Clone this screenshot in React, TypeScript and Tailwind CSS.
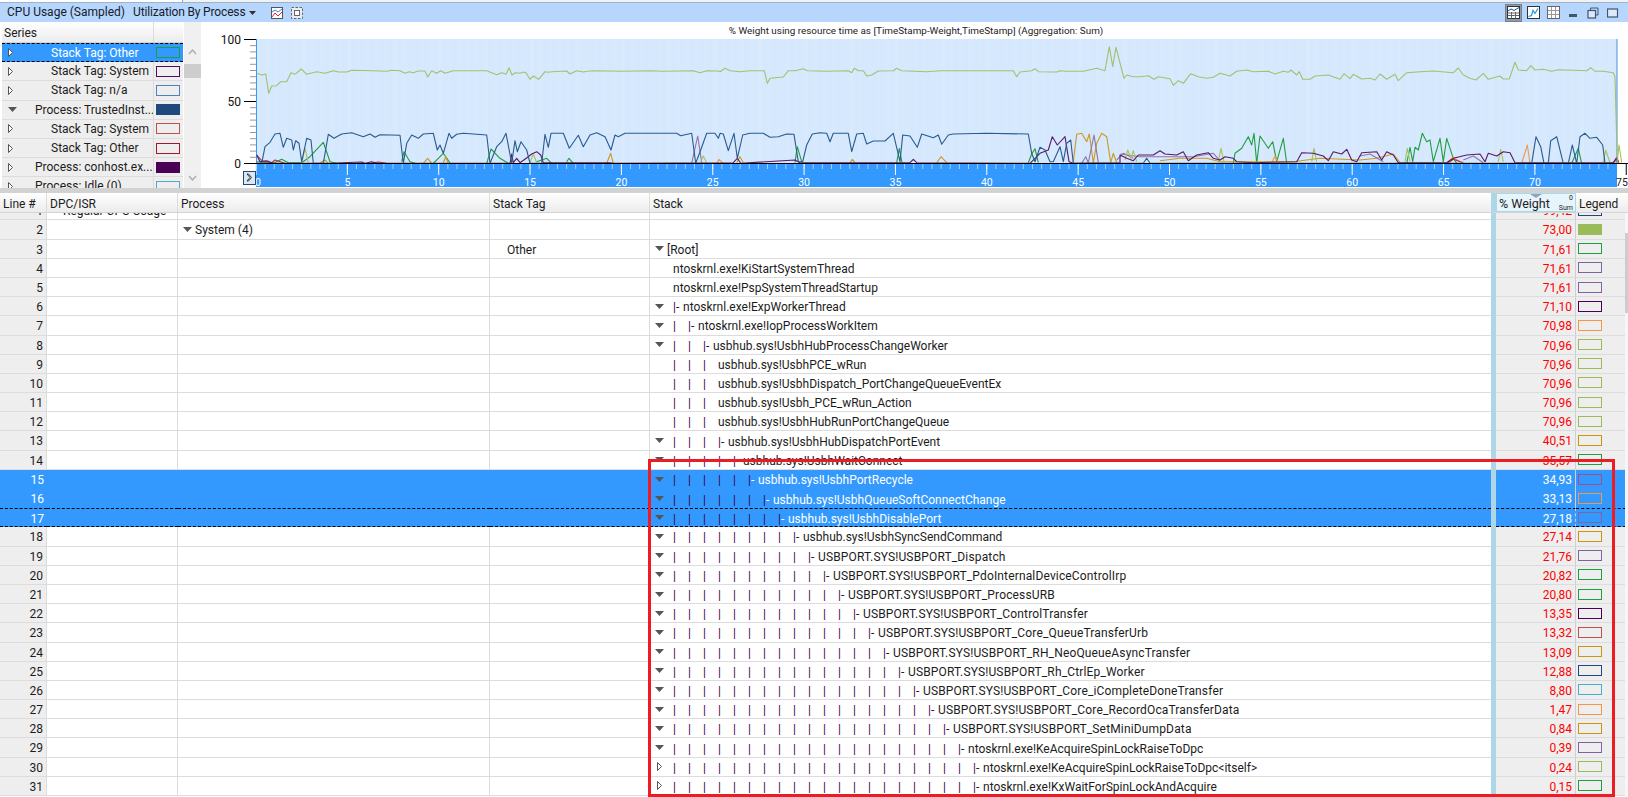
import clsx from "clsx";

// point lists are read off zoomed crops, so each helper maps crop coords to page coords
const crop = (ox: number, oy: number, p: number[]) => {
  const out: string[] = [];
  for (let i = 0; i < p.length; i += 2) out.push(`${(ox + p[i] / 3).toFixed(1)},${(oy + p[i + 1] / 3).toFixed(1)}`);
  return out;
};
const z6 = (p: number[]) => crop(230, 30, p);
const z7 = (p: number[]) => crop(720, 30, p);
const z8 = (p: number[]) => crop(1120, 30, p);

const oliveMain = [
  ...z6([80,130,95,135,107,132,116,190,125,168,140,167,152,155,170,155,183,128,195,133,214,117,230,133,260,125,285,130,310,122,325,126,350,126,365,121,430,122,470,124,485,121,510,122,525,130,538,125,550,128,565,123,585,123,593,141,605,122,620,130,632,122,645,130,670,122,770,122,800,134,815,128,828,133,837,113,846,135,856,128,870,130,880,126,888,128,900,148,910,138,926,148,945,125,955,127,965,125,1010,123,1020,132,1040,122,1060,126,1072,124,1090,122,1180,124,1260,122,1300,124,1390,122,1410,128,1430,122,1465,123]),
  ...z7([0,125,15,115,30,122,60,125,90,122,133,122,142,160,150,145,190,141,205,122,225,122,250,116,262,122,320,124,385,122,395,128,403,115,415,122,430,122,440,138,455,135,475,123,520,122,530,115,545,122,620,125,660,122,880,122,890,140,900,126,935,122,945,116,955,125,1010,126,1020,122,1040,124,1090,124,1130,115,1155,122,1168,50,1178,110,1188,52]),
  ...z8([12,145,20,135,40,140,60,140,85,137,102,148,115,140,150,146,160,166,175,152,190,160,212,131,235,140,260,145,280,142,300,130,330,138,350,124,380,120,400,125,445,124,465,132,490,124,505,127,513,120,530,135,538,125,548,148,570,148,585,138,625,135,660,148,672,131,690,146,700,133,725,147,750,145,765,150,780,132,800,148,825,133,835,152,860,128,900,125,940,123,1000,128,1015,114,1030,135,1050,145,1068,150,1090,130,1105,148,1140,138,1150,147,1168,147,1185,97,1195,120,1220,122,1232,107,1245,120,1270,118,1295,124,1315,119,1400,122,1412,113,1425,124,1450,124,1480,128,1485,140,1492,400]),
];

const navyMain = [
  ...z6([80,400,95,400,105,350,120,337,135,312,150,310,160,352,170,325,185,330,190,360,197,332,207,340,215,395,230,325,243,330,250,400,280,400,295,313,312,325,335,312,365,308,400,320,420,312,435,322,450,314,510,316,520,400,530,340,545,315,565,325,580,312,610,310,622,360,630,345,640,370,657,310,665,325,680,313,700,310,770,315,780,400,800,350,815,335,828,310,845,400,855,332,862,365,873,335,890,360,900,400,935,400,945,313,955,352,963,310,1000,310,1018,355,1045,316,1060,350,1080,315,1100,308,1125,320,1143,360,1155,315,1165,320,1185,310,1340,310,1352,317,1385,310,1397,400,1412,360,1430,310,1455,310,1465,325,1470,311]),
  ...z7([0,310,10,312,25,362,42,310,52,385,68,315,90,310,130,310,150,322,175,320,200,312,222,313,235,395,248,395,260,345,277,312,300,308,320,310,330,335,340,310,385,310,395,365,410,312,430,310,440,342,460,333,495,333,520,310,540,395,548,315,570,318,592,352,605,312,640,323,655,315,665,343,685,315,700,312,800,310,925,312,935,370,945,395,960,352,975,360,990,395,1000,395,1020,350,1030,395,1040,340,1052,330,1060,400]),
  ...z8([70,400,80,385,90,400,1235,400,1248,320,1262,350,1272,400,1285,400,1292,332,1310,320,1330,400,1345,400,1357,345,1370,400,1380,320,1395,310,1410,325,1430,322,1448,345,1455,400,1492,400]),
];

const purpleMain = [
  ...z6([80,375,90,395,110,392,130,400,300,400,395,396,405,400,425,395,440,400,840,400,845,372,850,398,860,385,870,398,895,380,905,372,920,365,932,375,940,398,1140,398,1150,400]),
  ...z7([40,398,52,385,62,400,225,390,240,398,570,398,580,388,590,398,930,400,960,370,985,360,997,320,1012,345,1035,320,1047,395,1060,400,1200,398]),
  ...z8([0,375,20,385,40,392,55,375,100,375,120,362,135,372,170,375,190,365,205,392,230,375,265,368,280,385,300,390,315,380,340,385,350,395,400,398,530,395,545,368,580,370,610,378,625,392,640,365,665,372,680,358,695,390,710,395,725,368,770,365,785,390,800,365,820,375,835,398,860,398,980,398,1000,385,1040,375,1080,372,1095,395,1105,370,1130,378,1150,365,1170,368,1185,398,1480,398,1490,385,1492,398]),
];

const greens = [
  z6([80,395,130,400,155,388,175,398,215,398,240,380,280,337,300,395,320,400]),
  z6([515,395,522,365,540,395,555,400]),
  z6([610,400,640,370,660,398]),
  z6([770,400,783,357,810,385,835,400]),
  z6([920,395,950,385,965,400]),
  z6([1010,395,1017,385,1030,400]),
  z7([225,398,232,350,245,395]),
  z7([530,398,538,355,546,398]),
  z7([925,398,935,372,945,356,955,398]),
  z8([340,400,345,370,365,355,385,320,395,345,402,310,410,400,420,318,445,355,458,335,470,395,490,325,500,400]),
  z8([860,400,870,352,878,395,885,352,895,360,907,310,920,335,930,330,940,395,960,325,970,395,980,325,1000,385,1010,400]),
  z8([1355,400,1375,355,1385,400]),
];

const golds = [
  z6([580,400,593,385,605,400]),
  z6([640,398,647,380,655,400]),
  z6([1130,400,1142,370,1150,400]),
  z6([270,398,285,390,295,400]),
  z7([50,398,60,380,70,398]),
  z7([390,398,397,388,405,398]),
  z7([650,398,663,380,680,398]),
  z7([1060,395,1070,313,1085,310,1100,335,1108,312,1120,398,1130,340,1145,310,1160,320,1172,398,1180,370,1190,398]),
  z8([120,392,180,385,260,385,300,395,520,395,600,385,720,390,770,385,820,372,840,398]),
];

const oranges = [
  z6([1460,400,1467,388,1480,400]),
  z8([455,398,465,378,475,398]),
  z8([980,398,1000,382,1020,395]),
  z8([1205,400,1222,345,1230,400]),
];

const lilacs = [
  z6([1385,400,1403,318,1415,398]),
  z7([1085,400,1097,380,1105,398,1122,315,1135,398]),
  z7([1190,390,1210,370,1240,385]),
  z8([1,372,60,380,130,380,220,380,280,370,300,392]),
  z8([1030,390,1060,378,1090,398]),
  z8([720,378,750,372,790,395]),
];

const olives = [
  z6([215,400,225,355,235,398]),
  z6([900,398,910,372,920,398]),
  z6([1412,395,1420,378,1430,398]),
  z8([15,390,23,360,33,385,40,362,50,395]),
  z8([295,395,303,355,312,395]),
  z8([575,395,582,355,590,395]),
  z8([855,395,862,355,870,395]),
  z8([1135,395,1142,358,1150,395]),
  z8([1450,398,1457,360,1470,398,1492,395,1497,345,1505,398]),
];

const reds = [
  z6([80,375,95,392,125,398,135,390,165,400]),
  z6([420,400,445,396,470,400]),
  z8([985,398,1000,388,1030,398]),
  z8([1480,398,1490,382,1497,398]),
];

const Line = ({ pts, color, w = 1.1 }: { pts: string[]; color: string; w?: number }) => (
  <polyline points={pts.join(" ")} fill="none" stroke={color} strokeWidth={w} strokeLinejoin="round" />
);

function Chart() {
  const toX = (s: number) => 256 + s * 18.27;
  const stripes = Array.from({ length: 149 }, (_, i) => i);
  const ticks = Array.from({ length: 149 }, (_, i) => i);
  const labels = Array.from({ length: 16 }, (_, i) => i * 5);
  const yMinor = [5, 15, 20, 25, 30, 35, 40, 45, 55, 60, 65, 70, 75, 80, 85, 90, 95, 10];
  return (
    <svg viewBox="201 22 1427 166" className="w-[1427px] h-[166px] block shrink-0">
      <text x="916" y="34" textAnchor="middle" fontSize="9.9" fill="#222">
        % Weight using resource time as [TimeStamp-Weight,TimeStamp] (Aggregation: Sum)
      </text>
      <rect x="256" y="39" width="1361" height="125" fill="#d5e8fd" />
      {stripes.map((i) => (
        <rect key={i} x={256 + i * 9.13} y="39" width="4" height="125" fill="#ffffff" opacity={(i * 7) % 5 === 0 ? 0.12 : 0.05} />
      ))}
      <line x1="256.5" y1="39" x2="256.5" y2="164" stroke="#3399ff" />
      <line x1="1617" y1="39" x2="1617" y2="164" stroke="#4a90e2" />
      <line x1="256" y1="39.5" x2="244" y2="39.5" stroke="#000" />
      <line x1="256" y1="101.5" x2="244" y2="101.5" stroke="#000" />
      <line x1="256" y1="163.5" x2="244" y2="163.5" stroke="#000" />
      {yMinor.map((v) => (
        <line key={v} x1="256" x2="250" y1={163.5 - v * 1.24} y2={163.5 - v * 1.24} stroke="#999" />
      ))}
      <text x="241" y="44" textAnchor="end" fontSize="12" fill="#111">100</text>
      <text x="241" y="106" textAnchor="end" fontSize="12" fill="#111">50</text>
      <text x="241" y="168" textAnchor="end" fontSize="12" fill="#111">0</text>

      {greens.map((p, i) => <Line key={i} pts={p} color="#1e9e3f" />)}
      {golds.map((p, i) => <Line key={i} pts={p} color="#cb9a1e" />)}
      {oranges.map((p, i) => <Line key={i} pts={p} color="#f79646" />)}
      {lilacs.map((p, i) => <Line key={i} pts={p} color="#8e74ad" />)}
      {olives.map((p, i) => <Line key={i} pts={p} color="#a8c060" />)}
      {reds.map((p, i) => <Line key={i} pts={p} color="#b3303a" />)}
      <Line pts={purpleMain} color="#5b1766" />
      <Line pts={navyMain} color="#2a5a8e" />
      <Line pts={oliveMain} color="#a3c06f" />

      <rect x="256" y="164" width="1361" height="23" fill="#3399ff" />
      <line x1="256" y1="163.5" x2="1628" y2="163.5" stroke="#000" />
      {ticks.map((i) => (
        <line key={i} x1={256 + i * 9.135} x2={256 + i * 9.135} y1="164" y2="169" stroke="#a6d0fb" />
      ))}
      {labels.map((s) => (
        <line key={s} x1={toX(s)} x2={toX(s)} y1="164" y2="175" stroke={s === 75 ? "#000" : "#ffffff"} />
      ))}
      {labels.map((s) => (
        <text key={s} x={s === 0 ? 258 : s === 75 ? 1622 : toX(s)} y="186" fontSize="10.5" textAnchor="middle" fill={s === 75 ? "#222" : "#ffffff"}>
          {s}
        </text>
      ))}
      <rect x="243.500" y="171.500" width="12" height="13" fill="#dbe8f6" stroke="#1f497d" />
      <path d="M247 174h1.500l3 3.500l-3 3.500H247l3-3.500z" fill="#fff" stroke="#333" strokeWidth="1" />
    </svg>
  );
}

const DownTri = ({ color = "#555" }: { color?: string }) => (
  <svg width="9" height="5" viewBox="0 0 9 5" className="shrink-0"><path d="M0 0h9L4.500 5z" fill={color} /></svg>
);
const RightTri = () => (
  <svg width="5" height="9" viewBox="0 0 5 9" className="shrink-0"><path d="M.5.5L4.500 4.500L.5 8.500z" fill="#fff" stroke="#555" /></svg>
);

function Swatch({ color, filled }: { color: string; filled?: boolean }) {
  return (
    <span
      className="block w-[24px] h-[11px] border shrink-0"
      style={{ borderColor: color, backgroundColor: filled ? color : undefined }}
    />
  );
}

const seriesRows = [
  { label: "Stack Tag: Other", tri: "r", indent: true, color: "#1e9e3f", selected: true },
  { label: "Stack Tag: System", tri: "r", indent: true, color: "#4b0f5c" },
  { label: "Stack Tag: n/a", tri: "r", indent: true, color: "#4f81bd" },
  { label: "Process: TrustedInst...", tri: "d", color: "#1f497d", filled: true },
  { label: "Stack Tag: System", tri: "r", indent: true, color: "#c0504d" },
  { label: "Stack Tag: Other", tri: "r", indent: true, color: "#a5162a" },
  { label: "Process: conhost.ex...", tri: "r", color: "#4b0055", filled: true },
  { label: "Process: Idle (0)", tri: "r", color: "#4bacc6" },
];

function SeriesPanel() {
  return (
    <div className="w-[201px] h-[166px] shrink-0 flex overflow-hidden pl-[2px]">
      <div className="w-[181px] shrink-0">
        <div className="h-[21px] flex bg-gradient-to-b from-white to-[#ececec] border-b border-[#d4d4d4]">
          <span className="w-[152px] pl-[2px] leading-[22px] border-r border-[#dcdcdc]">Series</span>
        </div>
        {seriesRows.map((r, i) => (
          <div
            key={i}
            className={clsx(
              "flex items-center h-[19.2px] shrink-0",
              r.selected ? "bg-[#3399ff] text-white border-y border-dashed border-black" : "bg-[#eeeeee] border-b border-[#dcdcdc]"
            )}
          >
            <span className={clsx("w-[152px] h-full flex items-center overflow-hidden whitespace-nowrap", !r.selected && "border-r border-[#dcdcdc]")}>
              <span className="w-[33px] flex justify-start pl-[6px] shrink-0">{r.tri === "d" ? <DownTri /> : <RightTri />}</span>
              <span className={r.indent ? "pl-[16px]" : ""}>{r.label}</span>
            </span>
            <span className="pl-[2px]"><Swatch color={r.color} filled={r.filled} /></span>
          </div>
        ))}
      </div>
      <div className="w-[17px] ml-[1px] shrink-0 flex flex-col items-center bg-[#f0f0f0]">
        <svg width="9" height="6" viewBox="0 0 9 6" className="mt-[27px] shrink-0"><path d="M1 5l3.500-4L8 5" fill="none" stroke="#aaa" strokeWidth="1.300" /></svg>
        <div className="w-full h-[14px] bg-[#cdcdcd] mt-[9px] shrink-0" />
        <svg width="9" height="6" viewBox="0 0 9 6" className="mt-[97px] shrink-0"><path d="M1 1l3.500 4L8 1" fill="none" stroke="#aaa" strokeWidth="1.300" /></svg>
      </div>
    </div>
  );
}

type Row = {
  line: number;
  slot?: number;
  branch?: boolean;
  text?: string;
  tri?: "d" | "r";
  weight: string;
  color: string;
  filled?: boolean;
  dpc?: string;
  process?: string;
  tag?: string;
  root?: boolean;
};

const GOLD = "#c8970f";
const PURP = "#8064a2";
const GRN = "#1e9e3f";
const OLV = "#9bbb59";
const DRK = "#4b0055";

const rows: Row[] = [
  { line: 1, dpc: "Regular CPU Usage", weight: "99,42", color: "#1f497d" },
  { line: 2, process: "System (4)", weight: "73,00", color: OLV, filled: true },
  { line: 3, tag: "Other", root: true, text: "[Root]", tri: "d", weight: "71,61", color: GRN },
  { line: 4, slot: 0, text: "ntoskrnl.exe!KiStartSystemThread", weight: "71,61", color: PURP },
  { line: 5, slot: 0, text: "ntoskrnl.exe!PspSystemThreadStartup", weight: "71,61", color: PURP },
  { line: 6, slot: 0, branch: true, tri: "d", text: "ntoskrnl.exe!ExpWorkerThread", weight: "71,10", color: DRK },
  { line: 7, slot: 1, branch: true, tri: "d", text: "ntoskrnl.exe!IopProcessWorkItem", weight: "70,98", color: "#f79646" },
  { line: 8, slot: 2, branch: true, tri: "d", text: "usbhub.sys!UsbhHubProcessChangeWorker", weight: "70,96", color: OLV },
  { line: 9, slot: 3, text: "usbhub.sys!UsbhPCE_wRun", weight: "70,96", color: OLV },
  { line: 10, slot: 3, text: "usbhub.sys!UsbhDispatch_PortChangeQueueEventEx", weight: "70,96", color: OLV },
  { line: 11, slot: 3, text: "usbhub.sys!Usbh_PCE_wRun_Action", weight: "70,96", color: OLV },
  { line: 12, slot: 3, text: "usbhub.sys!UsbhHubRunPortChangeQueue", weight: "70,96", color: OLV },
  { line: 13, slot: 3, branch: true, tri: "d", text: "usbhub.sys!UsbhHubDispatchPortEvent", weight: "40,51", color: GOLD },
  { line: 14, slot: 4, branch: true, tri: "d", text: "usbhub.sys!UsbhWaitConnect", weight: "35,57", color: GRN },
  { line: 15, slot: 5, branch: true, tri: "d", text: "usbhub.sys!UsbhPortRecycle", weight: "34,93", color: "#a0508c" },
  { line: 16, slot: 6, branch: true, tri: "d", text: "usbhub.sys!UsbhQueueSoftConnectChange", weight: "33,13", color: "#f79646" },
  { line: 17, slot: 7, branch: true, tri: "d", text: "usbhub.sys!UsbhDisablePort", weight: "27,18", color: PURP },
  { line: 18, slot: 8, branch: true, tri: "d", text: "usbhub.sys!UsbhSyncSendCommand", weight: "27,14", color: GOLD },
  { line: 19, slot: 9, branch: true, tri: "d", text: "USBPORT.SYS!USBPORT_Dispatch", weight: "21,76", color: PURP },
  { line: 20, slot: 10, branch: true, tri: "d", text: "USBPORT.SYS!USBPORT_PdoInternalDeviceControlIrp", weight: "20,82", color: GRN },
  { line: 21, slot: 11, branch: true, tri: "d", text: "USBPORT.SYS!USBPORT_ProcessURB", weight: "20,80", color: GRN },
  { line: 22, slot: 12, branch: true, tri: "d", text: "USBPORT.SYS!USBPORT_ControlTransfer", weight: "13,35", color: DRK },
  { line: 23, slot: 13, branch: true, tri: "d", text: "USBPORT.SYS!USBPORT_Core_QueueTransferUrb", weight: "13,32", color: "#c0504d" },
  { line: 24, slot: 14, branch: true, tri: "d", text: "USBPORT.SYS!USBPORT_RH_NeoQueueAsyncTransfer", weight: "13,09", color: GOLD },
  { line: 25, slot: 15, branch: true, tri: "d", text: "USBPORT.SYS!USBPORT_Rh_CtrlEp_Worker", weight: "12,88", color: "#1f497d" },
  { line: 26, slot: 16, branch: true, tri: "d", text: "USBPORT.SYS!USBPORT_Core_iCompleteDoneTransfer", weight: "8,80", color: "#4bacc6" },
  { line: 27, slot: 17, branch: true, tri: "d", text: "USBPORT.SYS!USBPORT_Core_RecordOcaTransferData", weight: "1,47", color: "#f79646" },
  { line: 28, slot: 18, branch: true, tri: "d", text: "USBPORT.SYS!USBPORT_SetMiniDumpData", weight: "0,84", color: GOLD },
  { line: 29, slot: 19, branch: true, tri: "d", text: "ntoskrnl.exe!KeAcquireSpinLockRaiseToDpc", weight: "0,39", color: PURP },
  { line: 30, slot: 20, branch: true, tri: "r", text: "ntoskrnl.exe!KeAcquireSpinLockRaiseToDpc<itself>", weight: "0,24", color: OLV },
  { line: 31, slot: 20, branch: true, tri: "r", text: "ntoskrnl.exe!KxWaitForSpinLockAndAcquire", weight: "0,15", color: GRN },
];

function StackCell({ row }: { row: Row }) {
  if (row.text === undefined) return null;
  const pipes = Array.from({ length: row.slot ?? 0 }, (_, i) => i);
  return (
    <div className="flex items-center whitespace-nowrap h-full">
      <span className={clsx("shrink-0 flex items-center pl-[5px]", row.root ? "w-[17px]" : "w-[23px]")}>
        {row.tri === "d" && <DownTri />}
        {row.tri === "r" && <span className="pl-[2px]"><RightTri /></span>}
      </span>
      <span className="flex pt-[2px]">
        {pipes.map((i) => (
          <span key={i} className="w-[15px] shrink-0 text-[#3f0050]">|</span>
        ))}
        {row.branch && <span className="w-[10px] shrink-0"><span className="text-[#3f0050]">|</span>-</span>}
        <span className={row.text.startsWith("USBPORT") ? "tracking-[0.15px]" : ""}>{row.text}</span>
      </span>
    </div>
  );
}

function TableRow({ row }: { row: Row }) {
  const selected = row.line >= 15 && row.line <= 17;
  const dashed = row.line === 17;
  const edge = dashed
    ? "border-y border-dashed border-black"
    : selected
      ? ""
      : "border-b border-[#dcdcdc]";
  return (
    <div className={clsx("flex h-[19.2px] shrink-0", selected ? "text-white" : "text-[#1c1c1c]")}>
      <div className={clsx("w-[47px] shrink-0 text-right pr-[3px] leading-[21px]", edge, selected ? "bg-[#3399ff]" : "bg-[#eeeeee] border-r border-r-[#dcdcdc]")}>
        {row.line}
      </div>
      <div className={clsx("w-[131px] shrink-0 pl-[16px] leading-[21px] whitespace-nowrap", edge, selected ? "bg-[#3399ff]" : "border-r border-r-[#dcdcdc]")}>
        {row.dpc}
      </div>
      <div className={clsx("w-[312px] shrink-0 flex items-center", edge, selected ? "bg-[#3399ff]" : "border-r border-r-[#dcdcdc]")}>
        {row.process && (
          <>
            <span className="pl-[5px] pr-[3px]"><DownTri /></span>
            <span className="pt-[2px]">{row.process}</span>
          </>
        )}
      </div>
      <div className={clsx("w-[160px] shrink-0 pl-[17px] leading-[21px]", edge, selected ? "bg-[#3399ff]" : "border-r border-r-[#dcdcdc]")}>
        {row.tag}
      </div>
      <div className={clsx("w-[841px] shrink-0", edge, selected && "bg-[#3399ff]")}>
        <StackCell row={row} />
      </div>
      <div className="w-[5px] shrink-0 bg-[#add6e6]" />
      <div className={clsx("w-[80px] shrink-0 text-right pr-[3px] leading-[21px] border-r border-r-[#cfcfcf]", edge, selected ? "bg-[#3399ff]" : "bg-[#eeeeee] text-[#ff0000]")}>
        {row.weight}
      </div>
      <div className={clsx("w-[50px] shrink-0 flex items-center pl-[2px]", edge, selected ? "bg-[#3399ff]" : "bg-[#eeeeee]")}>
        <Swatch color={row.color} filled={row.filled} />
      </div>
    </div>
  );
}

function HeadCell({ w, children, last }: { w: string; children?: React.ReactNode; last?: boolean }) {
  return (
    <div className={clsx(w, "shrink-0 pl-[3px] leading-[22px] whitespace-nowrap", !last && "border-r border-[#dcdcdc]")}>{children}</div>
  );
}

function Table() {
  return (
    <div className="h-[584px] overflow-hidden relative">
      <div className="flex flex-col -mt-[11.8px]">
        {rows.map((r) => <TableRow key={r.line} row={r} />)}
      </div>
      <div className="absolute right-0 top-0 w-[3px] h-full bg-[#f6f6f6]">
        <div className="h-[80px] mt-[20px] bg-[#cdcdcd]" />
      </div>
    </div>
  );
}

function TableHead() {
  return (
    <div className="flex h-[20px] bg-gradient-to-b from-white to-[#ececec] border-b border-[#d4d4d4] text-[#1c1c1c]">
      <HeadCell w="w-[47px]">Line #</HeadCell>
      <HeadCell w="w-[131px]">DPC/ISR</HeadCell>
      <HeadCell w="w-[312px]">Process</HeadCell>
      <HeadCell w="w-[160px]">Stack Tag</HeadCell>
      <HeadCell w="w-[841px]" last>Stack</HeadCell>
      <div className="w-[5px] shrink-0 bg-[#add6e6]" />
      <div className="w-[80px] shrink-0 relative bg-[#e6f4fc] border border-[#add6e6] pl-[2px] leading-[20px] text-[12.5px]">
        % Weight
        <span className="absolute right-[2px] top-[0px] text-[7px] leading-[8px]">0</span>
        <span className="absolute right-[2px] bottom-[-1px] text-[7px] leading-[8px]">Sum</span>
        <span className="absolute left-[33px] top-0 w-0 h-0 border-x-[6px] border-x-transparent border-t-[4px] border-t-[#8fa6b8]" />
      </div>
      <HeadCell w="w-[50px]" last>Legend</HeadCell>
    </div>
  );
}

function IconBtn({ children, pressed }: { children: React.ReactNode; pressed?: boolean }) {
  return (
    <span className="w-[20px] h-[18px] flex items-center justify-center shrink-0">
      <span className={clsx("w-[17px] h-[18px] flex items-center justify-center", pressed && "bg-[#8f9bad] border border-[#75808f]")}>
        {children}
      </span>
    </span>
  );
}

function TitleBar() {
  return (
    <div className="h-[20px] flex items-center bg-[#b7d6fd] border-t border-[#9db3cc] text-[#16202c]">
      <span className="pl-[7px] w-[133px] shrink-0 whitespace-nowrap -mt-[2px]">CPU Usage (Sampled)</span>
      <span className="w-[116px] shrink-0 whitespace-nowrap tracking-[-0.15px] -mt-[2px]">Utilization By Process</span>
      <svg width="7" height="4" viewBox="0 0 7 4" className="shrink-0"><path d="M0 0h7L3.500 4z" fill="#333" /></svg>
      <svg width="12" height="12" viewBox="0 0 12 12" className="ml-[15px] shrink-0">
        <rect x=".5" y=".5" width="11" height="11" fill="#fff" stroke="#555" />
        <path d="M1 5l3-2l3 2l4-3" fill="none" stroke="#3b82d6" />
        <path d="M1 10l3-4l3 3l4-4" fill="none" stroke="#e0262f" />
      </svg>
      <svg width="12" height="12" viewBox="0 0 12 12" className="ml-[8px] shrink-0">
        <rect x=".5" y=".5" width="11" height="11" fill="#e8eef5" stroke="#666" strokeDasharray="2.500 1.500" />
        <rect x="3.500" y="3.500" width="5" height="5" fill="#fff" stroke="#666" />
      </svg>
      <div className="flex-1" />
      <IconBtn pressed>
        <svg width="13" height="13" viewBox="0 0 13 13">
          <rect x=".5" y=".5" width="12" height="12" fill="#fff" stroke="#333" />
          <path d="M1 5l3-2l3 1.500l5-3" fill="none" stroke="#1c4f9c" />
          <path d="M1 7h11M1 9.500h11M4.500 6v6.500M8.500 6v6.500" stroke="#666" />
        </svg>
      </IconBtn>
      <IconBtn>
        <svg width="13" height="13" viewBox="0 0 13 13">
          <rect x=".5" y=".5" width="12" height="12" fill="#fff" stroke="#333" />
          <path d="M1.500 10.500l3-1l1.500-5l2 3l3-5" fill="none" stroke="#1b9ad6" strokeWidth="1.200" />
        </svg>
      </IconBtn>
      <IconBtn>
        <svg width="13" height="13" viewBox="0 0 13 13">
          <rect x=".5" y=".5" width="12" height="12" fill="#fff" stroke="#666" />
          <path d="M1 4.500h11M1 8.500h11M4.500 1v11M8.500 1v11" stroke="#999" />
        </svg>
      </IconBtn>
      <IconBtn>
        <span className="block w-[8px] h-[3px] bg-[#44546a] mt-[5px]" />
      </IconBtn>
      <IconBtn>
        <svg width="12" height="12" viewBox="0 0 12 12">
          <path d="M3.500 3V1h7.500v7H8.500" fill="none" stroke="#44546a" />
          <rect x="1" y="3.500" width="7.500" height="7.500" fill="#dbe9fb" stroke="#44546a" strokeWidth="1.200" />
        </svg>
      </IconBtn>
      <IconBtn>
        <svg width="12" height="10" viewBox="0 0 12 10">
          <rect x=".5" y="1" width="10" height="8" fill="#dbe9fb" stroke="#44546a" strokeWidth="1.200" />
        </svg>
      </IconBtn>
      <span className="w-[5px] shrink-0" />
    </div>
  );
}

export default function App() {
  return (
    <div className="w-[1628px] h-[797px] relative overflow-hidden bg-white font-['Roboto',sans-serif] text-[12px] text-[#1c1c1c]">
      <div className="h-[2px] flex">
        <div className="w-[183px] bg-white border-r border-[#a0a0a0]" />
        <div className="flex-1 bg-[#f2f2f2]" />
      </div>
      <TitleBar />
      <div className="flex h-[166px]">
        <SeriesPanel />
        <Chart />
      </div>
      <div className="h-[5px] bg-[#d2d2d2]" />
      <TableHead />
      <Table />
      <div className="absolute left-[648px] top-[459px] w-[967px] h-[338px] border-[3px] border-[#ed1c24]" />
    </div>
  );
}
